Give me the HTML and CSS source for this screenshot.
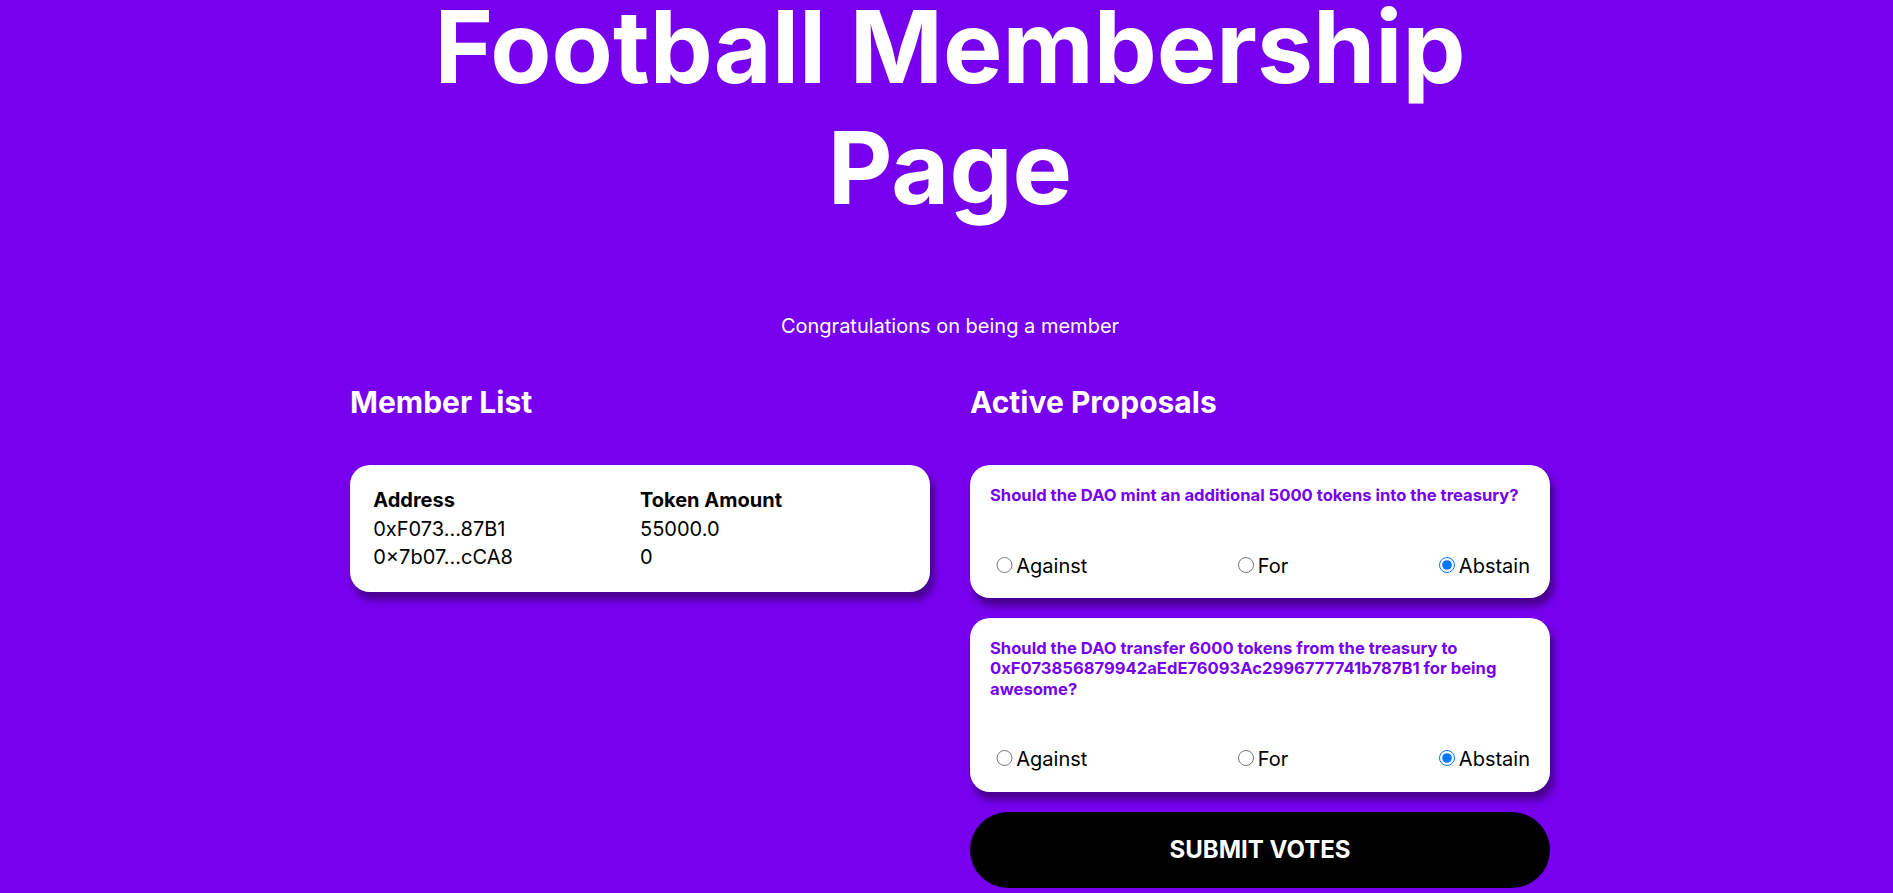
FILE: index.html
```html
<!DOCTYPE html>
<html lang="en">
<head>
<meta charset="utf-8">
<title>Football Membership Page</title>
<link rel="stylesheet" href="styles.css">
</head>
<body>
<div class="member-page">
  <h1 class="title">Football Membership Page</h1>
  <p class="subtitle">Congratulations on being a member</p>
  <div class="columns">
    <div class="column">
      <h2 class="section-title">Member List</h2>
      <div class="card">
        <table class="member-table">
          <thead>
            <tr><th>Address</th><th>Token Amount</th></tr>
          </thead>
          <tbody>
            <tr><td>0xF073...87B1</td><td>55000.0</td></tr>
            <tr><td>0×7b07...cCA8</td><td>0</td></tr>
          </tbody>
        </table>
      </div>
    </div>
    <form class="column proposals">
      <h2 class="section-title">Active Proposals</h2>
      <div class="card">
        <h5 class="question">Should the DAO mint an additional 5000 tokens into the treasury?</h5>
        <div class="options">
          <div class="option"><input type="radio" id="p1-0" name="p1" value="0"><label for="p1-0">Against</label></div>
          <div class="option"><input type="radio" id="p1-1" name="p1" value="1"><label for="p1-1">For</label></div>
          <div class="option"><input type="radio" id="p1-2" name="p1" value="2" checked><label for="p1-2">Abstain</label></div>
        </div>
      </div>
      <div class="card">
        <h5 class="question">Should the DAO transfer 6000 tokens from the treasury to 0xF073856879942aEdE76093Ac2996777741b787B1 for being awesome?</h5>
        <div class="options">
          <div class="option"><input type="radio" id="p2-0" name="p2" value="0"><label for="p2-0">Against</label></div>
          <div class="option"><input type="radio" id="p2-1" name="p2" value="1"><label for="p2-1">For</label></div>
          <div class="option"><input type="radio" id="p2-2" name="p2" value="2" checked><label for="p2-2">Abstain</label></div>
        </div>
      </div>
      <button type="submit" class="submit">Submit Votes</button>
    </form>
  </div>
</div>
</body>
</html>
```
FILE: styles.css
```css
html, body {
  margin: 0;
  padding: 0;
  background-color: #7700ee;
  color: #fff;
  font-family: Inter, "Noto Sans", sans-serif;
  font-size: 20px;
  overflow: hidden;
}

.member-page {
  display: flex;
  flex-direction: column;
  width: 1200px;
  margin-left: calc(50% - 596.5px);
  text-align: center;
}

.title {
  font-size: 100px;
  font-weight: 700;
  line-height: 121px;
  margin: -14px 0 0 0;
}

.subtitle {
  font-size: 20px;
  line-height: 24px;
  margin: 86px 0 0 0;
}

.columns {
  display: flex;
  flex-direction: row;
  gap: 40px;
  margin-top: 46px;
  text-align: left;
}

.column {
  display: flex;
  flex-direction: column;
  flex: 1;
  gap: 20px;
  margin: 0;
}

.section-title {
  font-size: 30px;
  font-weight: 700;
  line-height: 36px;
  margin: 0 0 25px 0;
}

.card {
  background-color: #fff;
  color: #000;
  padding: 20px;
  border-radius: 20px;
  box-shadow: 3.9px 7.75px 7.75px hsl(0deg 0% 0% / 0.4);
}

.member-table {
  width: 100%;
  border-spacing: 2.5px;
  font-size: 20px;
  margin-bottom: -1px;
}

.member-table th,
.member-table td {
  text-align: left;
  padding: 1.25px;
  line-height: 24px;
}

.member-table th {
  font-weight: 700;
}

.question {
  font-size: 16.6px;
  font-weight: 700;
  color: #7700ee;
  margin: 0 0 47.5px 0;
  line-height: 20.3px;
}

.options {
  display: flex;
  justify-content: space-between;
  font-size: 20px;
  line-height: 24.2px;
}

.option input[type="radio"] {
  width: 16.25px;
  height: 16.25px;
  margin: 3.75px 3.75px 0 6.25px;
}

.submit {
  width: 100%;
  height: 76px;
  border: none;
  border-radius: 99999px;
  background-color: #000;
  color: #fff;
  font-family: inherit;
  font-weight: 700;
  font-size: 24px;
  text-transform: uppercase;
  cursor: pointer;
  padding: 0 15px;
}
```
